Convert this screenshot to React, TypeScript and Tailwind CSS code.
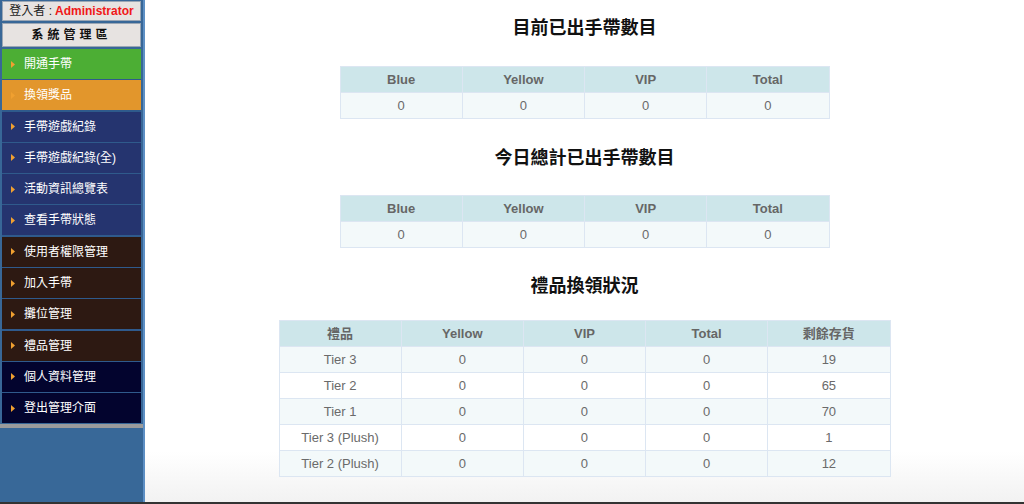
import React from "react";

const menu: { label: string; bg: string }[] = [
  { label: "開通手帶", bg: "bg-[#4cae34]" },
  { label: "換領獎品", bg: "bg-[#e2962c]" },
  { label: "手帶遊戲紀錄", bg: "bg-[#25346f]" },
  { label: "手帶遊戲紀錄(全)", bg: "bg-[#25346f]" },
  { label: "活動資訊總覽表", bg: "bg-[#25346f]" },
  { label: "查看手帶狀態", bg: "bg-[#25346f]" },
  { label: "使用者權限管理", bg: "bg-[#2d1912]" },
  { label: "加入手帶", bg: "bg-[#2d1912]" },
  { label: "攤位管理", bg: "bg-[#2d1912]" },
  { label: "禮品管理", bg: "bg-[#2d1912]" },
  { label: "個人資料管理", bg: "bg-[#03042e]" },
  { label: "登出管理介面", bg: "bg-[#03042e]" },
];

const font = { fontFamily: '"Liberation Sans", "Noto Sans CJK TC", sans-serif' };

function Table({ head, rows, width }: { head: string[]; rows: (string | number)[][]; width: string }) {
  return (
    <table className={`${width} border-collapse text-[13px] text-[#6a6a6a] table-fixed`}>
      <thead>
        <tr className="bg-[#cde6ea]">
          {head.map((h) => (
            <th key={h} className="h-[26px] border border-[#dce6f2] font-bold text-[#666] text-center p-0">
              {h}
            </th>
          ))}
        </tr>
      </thead>
      <tbody>
        {rows.map((r, i) => (
          <tr key={i} className={i % 2 === 0 ? "bg-[#f3f9fa]" : "bg-white"}>
            {r.map((c, j) => (
              <td key={j} className="h-[26px] border border-[#dce6f2] text-center p-0">
                {c}
              </td>
            ))}
          </tr>
        ))}
      </tbody>
    </table>
  );
}

export default function App() {
  return (
    <div className="w-[1024px] h-[504px] flex flex-col overflow-hidden bg-white" style={font}>
      <div className="flex flex-1 min-h-0">
        <aside className="w-[145px] shrink-0 bg-[#386797] border-r-2 border-[#5d8fc4] flex flex-col">
          <div className="mx-[2px] mt-[1px] h-[20px] bg-[#e7e3e1] border border-[#9aa6b4] flex items-center justify-center text-[12px] text-[#222]">
            登入者 : <span className="text-[#f01818] font-bold ml-[3px]">Administrator</span>
          </div>
          <div className="mx-[2px] mt-[2px] h-[24px] bg-[#e7e3e1] border border-[#9aa6b4] flex items-center justify-center text-[12px] font-bold text-[#111] tracking-[4px]">
            系統管理區
          </div>
          <div className="mt-[2px] mx-[2px] flex flex-col gap-[1.3px] bg-[#2f5a8c]">
            {menu.map((m) => (
              <div key={m.label} className={`${m.bg} h-[30px] flex items-center pl-[9px] text-white text-[12px]`}>
                <svg width="4" height="7" viewBox="0 0 4 7" className="mr-[9px]">
                  <path d="M0 0 L4 3.5 L0 7 Z" fill="#f0a030" />
                </svg>
                {m.label}
              </div>
            ))}
          </div>
          <div className="h-[4px] bg-[#9b9b9b] mt-[1px]" />
          <div className="flex-1 bg-[#386898]" />
        </aside>
        <main className="flex-1 flex flex-col items-center bg-gradient-to-b from-white from-90% to-[#f2f2f2]">
          <h2 className="mt-[16px] h-[24px] leading-[24px] text-[18px] font-bold text-[#111]">目前已出手帶數目</h2>
          <div className="mt-[26px]">
            <Table width="w-[490px]" head={["Blue", "Yellow", "VIP", "Total"]} rows={[[0, 0, 0, 0]]} />
          </div>
          <h2 className="mt-[27px] h-[24px] leading-[24px] text-[18px] font-bold text-[#111]">今日總計已出手帶數目</h2>
          <div className="mt-[25px]">
            <Table width="w-[490px]" head={["Blue", "Yellow", "VIP", "Total"]} rows={[[0, 0, 0, 0]]} />
          </div>
          <h2 className="mt-[26px] h-[24px] leading-[24px] text-[18px] font-bold text-[#111]">禮品換領狀況</h2>
          <div className="mt-[22px]">
            <Table
              width="w-[612px]"
              head={["禮品", "Yellow", "VIP", "Total", "剩餘存貨"]}
              rows={[
                ["Tier 3", 0, 0, 0, 19],
                ["Tier 2", 0, 0, 0, 65],
                ["Tier 1", 0, 0, 0, 70],
                ["Tier 3 (Plush)", 0, 0, 0, 1],
                ["Tier 2 (Plush)", 0, 0, 0, 12],
              ]}
            />
          </div>
        </main>
      </div>
      <div className="h-[2px] bg-[#333]" />
    </div>
  );
}
